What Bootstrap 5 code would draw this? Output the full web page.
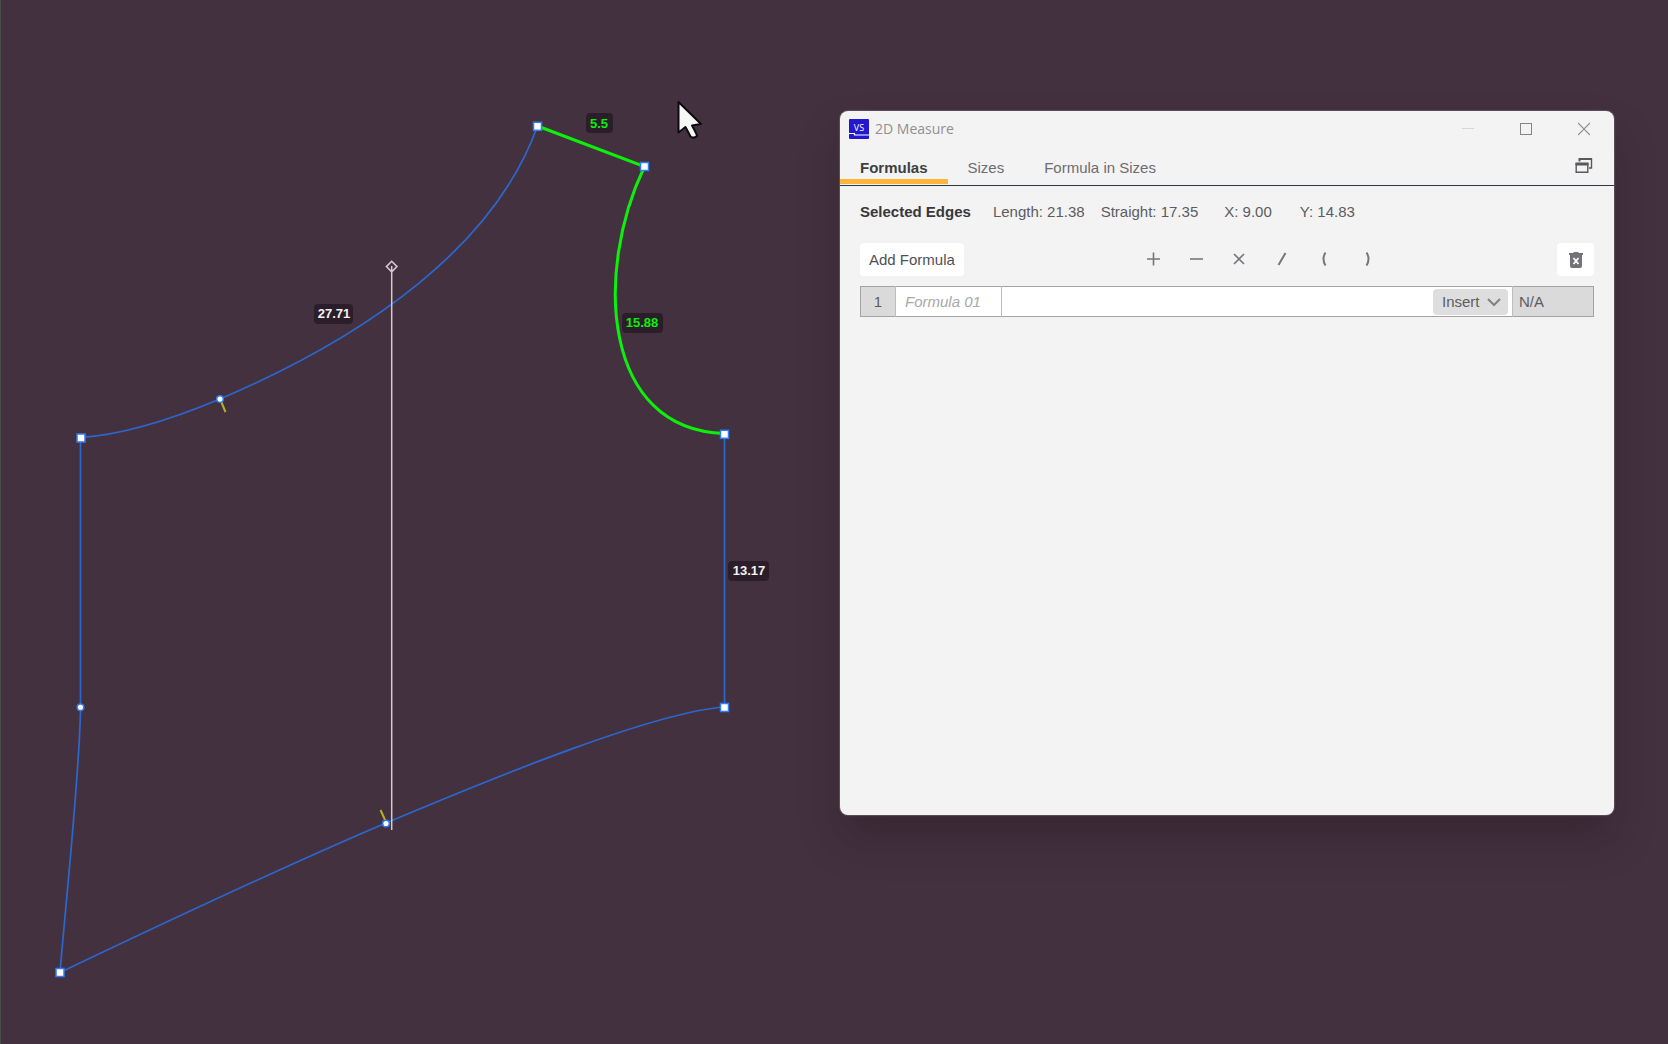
<!DOCTYPE html>
<html lang="en">
<head>
<meta charset="utf-8">
<meta name="viewport" content="width=device-width, initial-scale=1">
<title>2D Measure</title>
<link href="https://cdn.jsdelivr.net/npm/bootstrap@5.3.0/dist/css/bootstrap.min.css" rel="stylesheet">
<style>
  body { background: #443140; font-family: "Liberation Sans", Arial, sans-serif; font-size: 15px; line-height: 20px; color: #5c5c60; }
  .workspace { min-height: 100vh; border-left: 1px solid #4b4b4b; }
  .pattern { left: -1px; top: 0; }
  .edge { fill: none; stroke: #2a68cf; stroke-width: 1.7; }
  .picked { fill: none; stroke: #0cf00c; stroke-width: 3; }
  .axis { fill: none; stroke: #d3c9d1; stroke-width: 1.5; }
  .notch { stroke: #b9b022; stroke-width: 2; }
  .node { fill: #fff; stroke: #2f7df0; stroke-width: 1.5; }
  .tag { fill: #2b1e2a; }
  .tag-text { fill: #f2f2f2; font-size: 13px; font-weight: bold; text-anchor: middle; }
  .tag-text.on { fill: #0cf00c; }
  .tool-window { right: 54px; top: 111px; width: 774px; min-height: 704px; background: #f3f3f3; border-radius: 8px; box-shadow: 0 0 1px 1px #5d505a, 0 24px 40px rgba(30, 20, 20, .3); overflow: hidden; }
  .titlebar { height: 36px; padding: 0 24px 0 9px; color: #909090; }
  .titlebar span { font-family: "Open Sans", "Noto Sans", sans-serif; font-size: 14px; margin-left: 6px; }
  .plain { border: 0; background: none; padding: 0; color: inherit; display: inline-flex; align-items: center; justify-content: center; }
  .caption-buttons { gap: 46px; }
  .tabs { height: 39px; border-bottom: 1px solid #2f3a3e; }
  .tabs a { color: #6c6c72; text-decoration: none; height: 37px; padding: 11px 20px 0; border-bottom: 5px solid transparent; }
  .tabs a.active { color: #3f3f42; font-weight: bold; border-color: #ffb43c; }
  .detach { margin: 0 21px 2px auto; }
  .content { padding: 16px 20px; }
  .facts { gap: 22px; }
  .facts strong { color: #38383b; }
  .offsets { gap: 28px; }
  .white-btn { background: #fff; border: 0; border-radius: 4px; height: 33px; color: #505054; }
  .toolbar-row { margin: 21px 0 10px; }
  .add-btn { padding: 0 9px; }
  .trash-btn { width: 37px; padding: 0 0 2px; }
  .ops { color: #77777b; gap: 19px; margin-left: 177px; padding-bottom: 2px; }
  .ops button { width: 24px; height: 24px; }
  .formula-grid { table-layout: fixed; border: 1px solid #a3a3a3; background: #fff; height: 31px; }
  .formula-grid td, .formula-grid th { padding: 0; font-weight: normal; border-right: 1px solid #bdbdbd; vertical-align: middle; }
  .formula-grid input { border: 0; background: none; width: 100%; outline: 0; padding: 0 9px; }
  .formula-grid input::placeholder { color: #a8a8a8; font-style: italic; opacity: 1; }
  .formula-grid td.cell-result { width: 81px; padding-left: 6px; }
  .cell-no { width: 35px; }
  .cell-name { width: 106px; }
  .shade { background: #dadada; }
  .insert { appearance: none; border: 0; border-radius: 4px; width: 75px; height: 26px; padding: 0 9px; color: #5c5c60; background: #dedede url("data:image/svg+xml,%3Csvg xmlns='http://www.w3.org/2000/svg' width='14' height='10'%3E%3Cpath d='M1 2l6 6 6-6' fill='none' stroke='%23818185' stroke-width='2'/%3E%3C/svg%3E") no-repeat right 7px center; }
</style>
</head>
<body>
<main class="workspace position-relative overflow-hidden">
  <svg class="pattern position-absolute" width="840" height="1044" viewBox="0 0 840 1044" role="img" aria-label="Pattern piece">
    <path class="edge" d="M80.5 437.5C120 435 170 420 220 399C370 335 495 245 537.5 126"/>
    <path class="edge" d="M724.5 434V707C655 712 500 775 386 823C285 866 170 920 60 972.5C66 900 80 770 80.5 707V437.5"/>
    <path class="axis" d="M391.7 266V830M391.7 261.3l5.3 5.3-5.3 5.3-5.3-5.3z"/>
    <path class="notch" d="M220.5 400l5 12M386 822l-5.500-12"/>
    <path class="picked" d="M537.5 126L644.5 166.500C594 272 602 430 724.5 433.500"/>
    <rect class="node" x="533.500" y="122.300" width="8" height="8"/>
    <rect class="node" x="640.500" y="162.500" width="8" height="8"/>
    <rect class="node" x="720.500" y="430.300" width="8" height="8"/>
    <rect class="node" x="720.500" y="703.500" width="8" height="8"/>
    <rect class="node" x="56" y="968.500" width="8" height="8"/>
    <rect class="node" x="77" y="434" width="8" height="8"/>
    <circle class="node" cx="220" cy="399" r="3.300"/>
    <circle class="node" cx="80.500" cy="707.300" r="3.300"/>
    <circle class="node" cx="386" cy="823.500" r="3.300"/>
    <rect class="tag" x="586" y="113" width="27" height="20" rx="4"/>
    <text class="tag-text on" x="599" y="128">5.5</text>
    <rect class="tag" x="622" y="313" width="41" height="20" rx="4"/>
    <text class="tag-text on" x="642" y="327">15.88</text>
    <rect class="tag" x="314" y="304" width="39" height="20" rx="4"/>
    <text class="tag-text" x="334" y="318">27.71</text>
    <rect class="tag" x="728" y="561" width="41" height="20" rx="4"/>
    <text class="tag-text" x="749" y="575">13.17</text>
    <path d="M678.500 102V132.500L685.500 127L690.500 136.500Q693.500 139 697 136Q697 134.500 692 125.500L701 124Z" fill="#f6f6f6" stroke="#0c0a0c" stroke-width="2" stroke-linejoin="round"/>
  </svg>

  <section class="tool-window position-absolute" aria-label="2D Measure">
    <header class="titlebar d-flex align-items-center">
      <svg width="20" height="20" viewBox="0 0 20 20" aria-hidden="true"><rect width="20" height="20" rx="1" fill="#2318cc"/><text x="10" y="12" text-anchor="middle" font-size="9" font-family="Open Sans" fill="#fff">VS</text><path d="M0 14.500h5.500v1.500H20" fill="none" stroke="#fff" stroke-width="1.200"/></svg>
      <span class="me-auto">2D Measure</span>
      <div class="caption-buttons d-flex">
        <button class="plain" aria-label="Minimize"><svg width="12" height="14"><path d="M0 6.500h12" stroke="#d6d6d6"/></svg></button>
        <button class="plain" aria-label="Maximize"><svg width="12" height="14"><rect x=".5" y="1.500" width="11" height="11" fill="none" stroke="#858585"/></svg></button>
        <button class="plain" aria-label="Close"><svg width="12" height="14"><path d="M0 1l12 12M12 1L0 13" stroke="#8f8f8f" stroke-width="1.200"/></svg></button>
      </div>
    </header>
    <nav class="tabs d-flex">
      <a class="active" href="#">Formulas</a>
      <a href="#">Sizes</a>
      <a href="#">Formula in Sizes</a>
      <button class="plain detach" aria-label="Detach"><svg width="18" height="17" fill="none" stroke="#59595d"><path d="M4.500 4.500V2H17" stroke-width="2"/><path d="M16.500 1v10H14" stroke-width="1.400"/><path d="M.5 7h13" stroke-width="3"/><path d="M1.200 6v9.300h11.600V6" stroke-width="1.400"/></svg></button>
    </nav>
    <div class="content">
      <div class="facts d-flex">
        <strong>Selected Edges</strong>
        <div class="d-flex gap-3"><span>Length: 21.38</span><span>Straight: 17.35</span></div>
        <div class="offsets d-flex ps-1"><span>X: 9.00</span><span>Y: 14.83</span></div>
      </div>
      <div class="toolbar-row d-flex align-items-center">
        <button class="white-btn add-btn text-nowrap">Add Formula</button>
        <div class="ops d-flex">
          <button class="plain" aria-label="Plus"><svg width="14" height="14"><path d="M1 7h13M7.500 .5v13" stroke="currentColor" stroke-width="1.600"/></svg></button>
          <button class="plain" aria-label="Minus"><svg width="14" height="14"><path d="M1 7h13" stroke="currentColor" stroke-width="1.600"/></svg></button>
          <button class="plain" aria-label="Multiply"><svg width="14" height="14"><path d="M2 2l10 10M12 2L2 12" stroke="currentColor" stroke-width="1.700"/></svg></button>
          <button class="plain" aria-label="Divide"><svg width="14" height="14"><path d="M3.500 13L10.500 1" stroke="currentColor" stroke-width="2"/></svg></button>
          <button class="plain" aria-label="Open bracket"><svg width="14" height="14"><path d="M7.500 .5Q3.500 7 7.500 13.500" fill="none" stroke="currentColor" stroke-width="2"/></svg></button>
          <button class="plain" aria-label="Close bracket"><svg width="14" height="14"><path d="M5.500 .5Q9.500 7 5.500 13.500" fill="none" stroke="currentColor" stroke-width="2"/></svg></button>
        </div>
        <button class="white-btn trash-btn ms-auto" aria-label="Delete"><svg width="14" height="16"><path d="M0 1h4l1-1h4l1 1h4v2H0zM1 3h12v11q0 2-2 2H3q-2 0-2-2z" fill="#727278"/><path d="M4.500 6l5 6M9.500 6l-5 6" stroke="#fff" stroke-width="1.800"/></svg></button>
      </div>
      <table class="formula-grid w-100">
        <tbody><tr>
          <th class="shade text-center cell-no" scope="row">1</th>
          <td class="cell-name"><input type="text" placeholder="Formula 01" aria-label="Formula name"></td>
          <td><div class="d-flex align-items-center pe-1"><input type="text" aria-label="Formula"><select class="insert flex-shrink-0" aria-label="Insert"><option>Insert</option></select></div></td>
          <td class="shade cell-result border-end-0">N/A</td>
        </tr></tbody>
      </table>
    </div>
  </section>
</main>
<script src="https://cdn.jsdelivr.net/npm/bootstrap@5.3.0/dist/js/bootstrap.bundle.min.js"></script>
</body>
</html>
